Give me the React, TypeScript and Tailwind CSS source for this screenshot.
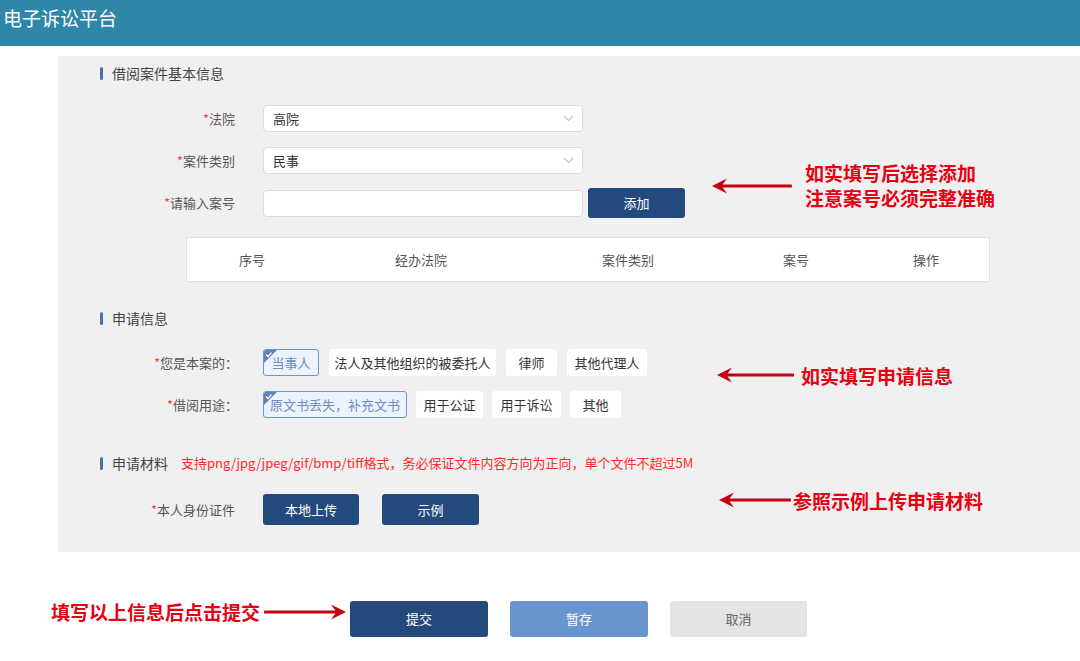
import React from "react";

const font = { fontFamily: '"Noto Sans CJK SC", "Noto Sans", sans-serif' };

function Chevron() {
  return (
    <svg width="11" height="7" viewBox="0 0 11 7" fill="none" stroke="#c4c4c4" strokeWidth="1.1">
      <path d="M1 1l4.5 4.5L10 1" />
    </svg>
  );
}

function SectionTitle({ title, note }: { title: string; note?: string }) {
  return (
    <div className="flex items-center h-[34px] pl-[42px]">
      <div className="w-[3px] h-[13px] rounded-sm bg-[#4b71a6]" />
      <span className="ml-[9px] text-[14px] text-[#444]">{title}</span>
      {note && <span className="ml-[13px] text-[13px] text-[#ff2a2a]">{note}</span>}
    </div>
  );
}

function Label({ text, w = "w-[177px]" }: { text: string; w?: string }) {
  return (
    <div className={`${w} text-right text-[13px] text-[#555] shrink-0`}>
      <span className="text-[#ff4040]">*</span>
      {text}
    </div>
  );
}

function Select({ value }: { value: string }) {
  return (
    <div className="ml-[28px] w-[320px] h-[27px] bg-white border border-[#dcdcdc] rounded-[4px] flex items-center justify-between pl-[9px] pr-[8px] text-[13px] text-[#333]">
      <span>{value}</span>
      <Chevron />
    </div>
  );
}

function Option({ text, w, active }: { text: string; w: string; active?: boolean }) {
  if (active) {
    return (
      <div className={`relative ${w} h-[27px] rounded-[3px] border border-[#7393c6] bg-[#edf3fc] text-[#6c8cc2] text-[13px] flex items-center justify-center overflow-hidden`}>
        <svg className="absolute left-0 top-0" width="13" height="13" viewBox="0 0 13 13">
          <path d="M0 0h13L0 13z" fill="#5f82bb" />
          <path d="M2 4.5l2 2L7.5 2.5" stroke="#fff" strokeWidth="1.2" fill="none" />
        </svg>
        {text}
      </div>
    );
  }
  return (
    <div className={`${w} h-[27px] rounded-[3px] bg-white text-[#333] text-[13px] flex items-center justify-center`}>
      {text}
    </div>
  );
}

function NavyButton({ text, w, h }: { text: string; w: string; h: string }) {
  return (
    <div className={`${w} ${h} rounded-[3px] bg-[#234a7d] text-white text-[13px] flex items-center justify-center`}>
      {text}
    </div>
  );
}

function ArrowLeft({ width = 80 }: { width?: number }) {
  return (
    <svg width={width} height="18" viewBox={`0 0 ${width} 18`}>
      <rect x="8" y="7.6" width={width - 8} height="3" rx="1.2" fill="#c3000f" />
      <path d="M0 9L15 1.5L9.5 9L15 16.5Z" fill="#c3000f" />
    </svg>
  );
}

function ArrowRight({ width = 82 }: { width?: number }) {
  return (
    <svg width={width} height="18" viewBox={`0 0 ${width} 18`}>
      <rect x="0" y="7.6" width={width - 8} height="3" rx="1.2" fill="#c3000f" />
      <path d={`M${width} 9L${width - 15} 1.5L${width - 9.5} 9L${width - 15} 16.5Z`} fill="#c3000f" />
    </svg>
  );
}

export default function App() {
  return (
    <div className="relative w-[1080px] h-[661px] bg-white overflow-hidden" style={font}>
      <header className="h-[46px] bg-[#2e86a8] flex items-center pb-[9px] pl-[3px]">
        <h1 className="text-[19px] text-white font-normal">电子诉讼平台</h1>
      </header>

      <main className="pl-[58px] pt-[10px]">
        <div className="bg-[#f0f0f0] pb-[27px]">
          <SectionTitle title="借阅案件基本信息" />

          <div className="mt-[15px] flex flex-col gap-[15px]">
            <div className="flex items-center">
              <Label text="法院" />
              <Select value="高院" />
            </div>
            <div className="flex items-center">
              <Label text="案件类别" />
              <Select value="民事" />
            </div>
            <div className="flex items-center h-[28px]">
              <Label text="请输入案号" />
              <div className="ml-[28px] w-[320px] h-[27px] bg-white border border-[#dcdcdc] rounded-[4px]" />
              <div className="ml-[5px]">
                <NavyButton text="添加" w="w-[97px]" h="h-[30px]" />
              </div>
            </div>
          </div>

          <div className="mt-[20px] ml-[128px] w-[804px] h-[45px] bg-white border border-[#e2e2e2] grid grid-cols-[130px_208px_206px_130px_130px] items-center text-center text-[13px] text-[#555]">
            <span>序号</span>
            <span>经办法院</span>
            <span>案件类别</span>
            <span>案号</span>
            <span>操作</span>
          </div>

          <div className="mt-[19px]">
            <SectionTitle title="申请信息" />
          </div>

          <div className="mt-[14px] flex flex-col gap-[15px]">
            <div className="flex items-center">
              <Label text="您是本案的：" w="w-[180px]" />
              <div className="ml-[25px] flex gap-[10px]">
                <Option text="当事人" w="w-[56px]" active />
                <Option text="法人及其他组织的被委托人" w="w-[167px]" />
                <Option text="律师" w="w-[51px]" />
                <Option text="其他代理人" w="w-[80px]" />
              </div>
            </div>
            <div className="flex items-center">
              <Label text="借阅用途：" w="w-[180px]" />
              <div className="ml-[25px] flex gap-[9px]">
                <Option text="原文书丢失，补充文书" w="w-[144px]" active />
                <Option text="用于公证" w="w-[67px]" />
                <Option text="用于诉讼" w="w-[69px]" />
                <Option text="其他" w="w-[51px]" />
              </div>
            </div>
          </div>

          <div className="mt-[28px]">
            <SectionTitle
              title="申请材料"
              note="支持png/jpg/jpeg/gif/bmp/tiff格式，务必保证文件内容方向为正向，单个文件不超过5M"
            />
          </div>

          <div className="mt-[14px] flex items-center">
            <Label text="本人身份证件" />
            <div className="ml-[28px] flex gap-[23px]">
              <NavyButton text="本地上传" w="w-[96px]" h="h-[31px]" />
              <NavyButton text="示例" w="w-[97px]" h="h-[31px]" />
            </div>
          </div>
        </div>
      </main>

      <div className="mt-[49px] pl-[350px] flex gap-[22px] text-[13px]">
        <div className="w-[138px] h-[36px] rounded-[3px] bg-[#244a7c] text-white flex items-center justify-center">提交</div>
        <div className="w-[138px] h-[36px] rounded-[3px] bg-[#6895cf] text-white flex items-center justify-center">暂存</div>
        <div className="w-[137px] h-[36px] rounded-[3px] bg-[#e4e4e4] text-[#666] flex items-center justify-center">取消</div>
      </div>

      {/* annotations */}
      <div className="absolute left-[712px] top-[177px]"><ArrowLeft width={80} /></div>
      <div className="absolute left-[805px] top-[160px] text-[19px] leading-[25px] font-bold text-[#e60012]">
        <div>如实填写后选择添加</div>
        <div>注意案号必须完整准确</div>
      </div>

      <div className="absolute left-[717px] top-[366px]"><ArrowLeft width={77} /></div>
      <div className="absolute left-[801px] top-[363px] text-[19px] leading-[25px] font-bold text-[#e60012]">如实填写申请信息</div>

      <div className="absolute left-[719px] top-[491px]"><ArrowLeft width={72} /></div>
      <div className="absolute left-[793px] top-[488px] text-[19px] leading-[25px] font-bold text-[#e60012]">参照示例上传申请材料</div>

      <div className="absolute left-[51px] top-[599px] text-[19px] leading-[25px] font-bold text-[#e60012]">填写以上信息后点击提交</div>
      <div className="absolute left-[264px] top-[603px]"><ArrowRight width={82} /></div>
    </div>
  );
}
